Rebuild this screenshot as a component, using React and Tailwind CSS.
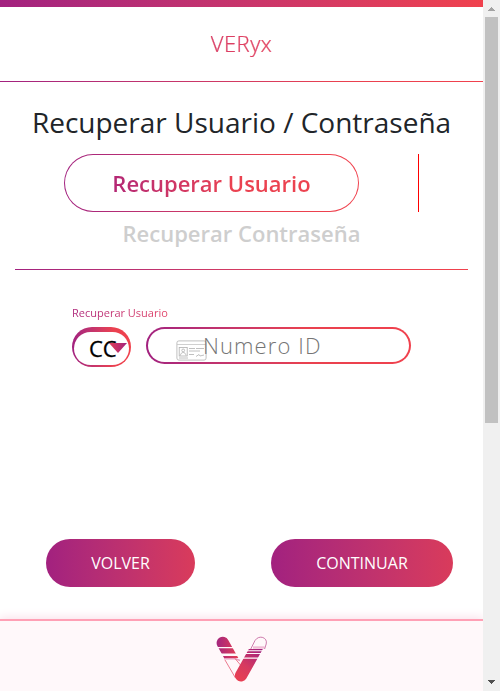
import React from "react";

function GradientRule({ className = "" }) {
  return <div className={`h-px bg-linear-to-r from-[#a2217f] via-[#e9414f] via-70% to-[#f0414d] ${className}`} />;
}

function CardIcon() {
  return (
    <svg className="h-[21px] w-[31px] shrink-0" viewBox="0 0 31 21" fill="none" stroke="#b0b0b0" strokeWidth="0.8">
      <rect x="0.9" y="0.9" width="29.2" height="19.2" rx="2" />
      <path d="M1 4.5H30" stroke="#c4c4c4" />
      <rect x="3.2" y="7.5" width="8" height="8.5" />
      <circle cx="7.2" cy="10.4" r="1.4" />
      <path d="M4.5 15.5c0-4 5.4-4 5.4 0M13 8.5h6M20 8.5h8M13 11h11M13 14.5h5M3 18h9M20 16.5l3-2 1 1.5 4-1" />
    </svg>
  );
}

function Logo() {
  return (
    <svg className="h-[46px] w-[52px]" viewBox="0 0 52 46" fill="none">
      <defs>
        <linearGradient id="left" x1="0" y1="0" x2="30" y2="0" gradientUnits="userSpaceOnUse">
          <stop stopColor="#a2257f" />
          <stop offset="0.8" stopColor="#ea4050" />
        </linearGradient>
        <linearGradient id="right" x1="18" y1="46" x2="44" y2="10" gradientUnits="userSpaceOnUse">
          <stop stopColor="#ee404e" />
          <stop offset="0.45" stopColor="#d63a60" />
          <stop offset="1" stopColor="#9c1d80" />
        </linearGradient>
        <clipPath id="leftBands">
          <path d="M0 0H52V11H0zM0 12.3H52V17.6H0zM0 20H52V22H0z" />
        </clipPath>
        <clipPath id="rightBands">
          <path d="M0 13H52V14.2H0zM0 15.2H52V17H0zM0 18H52V21.4H0zM0 22.8H52V46H0z" />
        </clipPath>
      </defs>
      <path d="M6.8 7L25 39.5" stroke="url(#left)" strokeWidth="12.4" strokeLinecap="round" clipPath="url(#leftBands)" />
      <path d="M8 22.8H19.5L24 24.5" stroke="#e9a1c2" strokeWidth="1.4" />
      <path d="M9 24L19.5 42M19 22.5L24.5 29" stroke="#e65a72" strokeWidth="0.8" />
      <path d="M37 11.5H48.5" stroke="#f0bdd5" strokeWidth="2.4" />
      <path d="M34.5 13.5L39 4.5C43 -1.7 52 1.5 50.2 8L48.6 13" stroke="#c25a98" strokeWidth="0.8" />
      <path d="M25 39.5L43.2 7" stroke="url(#right)" strokeWidth="12.2" strokeLinecap="round" clipPath="url(#rightBands)" />
    </svg>
  );
}

function Scrollbar() {
  return (
    <div className="flex w-[17px] shrink-0 flex-col items-center bg-[#f0f0f0]">
      <svg className="h-[17px] w-[17px] shrink-0" viewBox="0 0 17 17" shapeRendering="crispEdges">
        <path d="M5 11L8.5 7L12 11z" fill="#a3a3a3" />
      </svg>
      <div className="mr-px h-[406px] w-[13px] bg-[#c1c1c1]" />
      <svg className="mt-auto h-[17px] w-[17px] shrink-0" viewBox="0 0 17 17" shapeRendering="crispEdges">
        <path d="M5 6L8.5 10L12 6z" fill="#505050" />
      </svg>
    </div>
  );
}

export default function App() {
  return (
    <div className="flex h-[691px] w-[500px] overflow-hidden bg-white font-['Open_Sans',sans-serif]">
      <div className="flex w-[483px] flex-col overflow-hidden">
        <div className="h-[7px] bg-linear-to-r from-[#a2217f] to-[#f0414d]" />
        <header className="flex h-[74px] items-center justify-center pb-[2px]">
          <span className="bg-linear-to-r from-[#d83a64] to-[#e54761] bg-clip-text text-[22px] font-light leading-[30px] tracking-[0.5px] text-transparent [-webkit-text-stroke:0.2px_#dd4064]">VERyx</span>
        </header>
        <GradientRule />
        <main className="flex h-[537px] flex-col">
          <h1 className="mt-[23px] text-center text-[28px] leading-[34px] whitespace-nowrap text-[#212529]">Recuperar Usuario / Contraseña</h1>
          <div className="mt-[15px] flex h-[58px] justify-between pr-[64px] pl-[64px]">
            <div className="flex w-[295px] rounded-full bg-linear-to-r from-[#a2217f] via-[#e9414f] via-70% to-[#f0414d] p-px">
              <button className="flex flex-1 items-center justify-center rounded-full bg-white">
                <span className="bg-linear-to-r from-[#b32775] via-[#ea4150] via-60% to-[#ec4350] bg-clip-text text-[22px] font-semibold leading-[30px] whitespace-nowrap text-transparent">Recuperar Usuario</span>
              </button>
            </div>
            <div className="w-px bg-[#ff0000]" />
          </div>
          <div className="mt-[6px] text-center text-[22px] font-semibold leading-[30px] text-[#cecece]">Recuperar Contraseña</div>
          <GradientRule className="mx-[15px] mt-[21px]" />
          <form className="mt-[36px] ml-[72px]">
            <label className="block h-[14px] w-[97px] bg-linear-to-r from-[#ad267a] to-[#e34064] bg-clip-text text-[11px] leading-[14px] whitespace-nowrap text-transparent">Recuperar Usuario</label>
            <div className="mt-[7px] flex gap-[15px]">
              <div className="h-[40px] w-[59px] rounded-[20px] bg-linear-to-r from-[#a2217f] via-[#ea4150] via-70% to-[#f0414d] px-[2px] pt-[5px] pb-[2px]">
                <div className="flex h-full items-center rounded-[18px] bg-white pl-[15px] text-[22px] leading-[33px] text-black [-webkit-text-stroke:0.3px_black]">
                  <span>CC</span>
                  <svg className="relative -top-px -ml-[8px] h-[10px] w-[18px] shrink-0" viewBox="0 0 18 10">
                    <defs>
                      <linearGradient id="arrow"><stop stopColor="#e04058" /><stop offset="1" stopColor="#a2217f" /></linearGradient>
                    </defs>
                    <path d="M0 0H18L9 10z" fill="url(#arrow)" />
                  </svg>
                </div>
              </div>
              <div className="h-[37px] w-[265px] rounded-full bg-linear-to-r from-[#a2217f] via-[#e9414f] via-60% to-[#f0414d] p-[2px]">
                <div className="flex h-full items-center rounded-full bg-white pl-[28px]">
                  <span className="mt-[9px]"><CardIcon /></span>
                  <span className="mb-[2px] -ml-[4px] text-[22px] font-light leading-[30px] tracking-[1.1px] whitespace-nowrap text-[#757575]">Numero ID</span>
                </div>
              </div>
            </div>
          </form>
          <div className="mt-auto mb-[32px] flex justify-between pr-[30px] pl-[46px] text-[16px] text-white">
            <button className="h-[48px] w-[149px] rounded-full bg-linear-to-r from-[#a2217f] to-[#d93b5b]">VOLVER</button>
            <button className="h-[48px] w-[182px] rounded-full bg-linear-to-r from-[#a2217f] to-[#d93b5b]">CONTINUAR</button>
          </div>
        </main>
        <footer className="flex h-[72px] justify-center border-t-2 border-[#ffa0b5] bg-[#fff8fa] pt-[15px] shadow-[0_0_10px_1px_#f9dce7]">
          <Logo />
        </footer>
      </div>
      <Scrollbar />
    </div>
  );
}
